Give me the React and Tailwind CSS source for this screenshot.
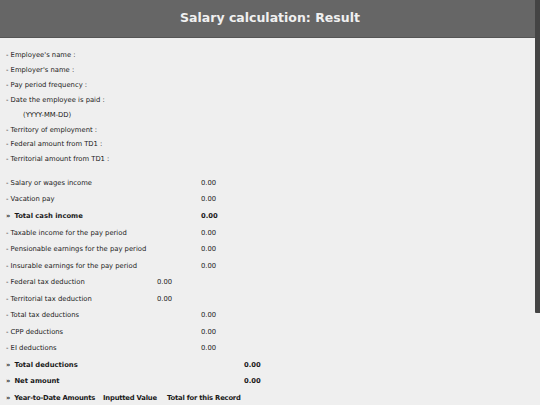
import React from "react";

const info = [
  "- Employee's name :",
  "- Employer's name :",
  "- Pay period frequency :",
  "- Date the employee is paid :",
  "(YYYY-MM-DD)",
  "- Territory of employment :",
  "- Federal amount from TD1 :",
  "- Territorial amount from TD1 :",
];

// col: 1 = narrow (157), 2 = middle (201), 3 = wide (244)
const amounts = [
  { label: "- Salary or wages income", col: 2 },
  { label: "- Vacation pay", col: 2 },
  { label: "Total cash income", col: 2, bold: true },
  { label: "- Taxable income for the pay period", col: 2 },
  { label: "- Pensionable earnings for the pay period", col: 2 },
  { label: "- Insurable earnings for the pay period", col: 2 },
  { label: "- Federal tax deduction", col: 1 },
  { label: "- Territorial tax deduction", col: 1 },
  { label: "- Total tax deductions", col: 2 },
  { label: "- CPP deductions", col: 2 },
  { label: "- EI deductions", col: 2 },
  { label: "Total deductions", col: 3, bold: true },
  { label: "Net amount", col: 3, bold: true },
];

const labelWidth = { 1: "w-[151px]", 2: "w-[195px]", 3: "w-[238px]" };

const Chevron = () => <span className="mr-[4px] font-bold">»</span>;

const App = () => {
  return (
    <div
      className="relative h-[405px] w-[540px] overflow-hidden bg-[#efefef] text-[#1a1a1a]"
      style={{ fontFamily: '"DejaVu Sans", sans-serif' }}
    >
      {/* Header */}
      <div className="flex h-[38px] items-center justify-center border-b border-[#555] bg-[#666]">
        <h1 className="text-[12.5px] font-bold text-[#f0f0f0]">Salary calculation: Result</h1>
      </div>

      {/* Employee info */}
      <div className="pl-[6px] pt-[10px] text-[6.8px]">
        {info.map((text) => (
          <div
            key={text}
            className={`flex h-[14.85px] items-center ${text.startsWith("(") ? "pl-[17px]" : ""}`}
          >
            {text}
          </div>
        ))}
      </div>

      {/* Amounts */}
      <div className="pl-[6px] pt-[8px] text-[6.8px]">
        {amounts.map((row) => (
          <div key={row.label} className={`flex h-[16.55px] items-center ${row.bold ? "font-bold" : ""}`}>
            <div className={`${labelWidth[row.col]} flex items-center`}>
              {row.bold && <Chevron />}
              {row.label}
            </div>
            <div>0.00</div>
          </div>
        ))}
        <div className="flex h-[16.55px] items-center font-bold tracking-[-0.2px]">
          <div className="flex w-[97px] items-center whitespace-nowrap">
            <Chevron />
            Year-to-Date Amounts
          </div>
          <div className="w-[64px] whitespace-nowrap">Inputted Value</div>
          <div className="whitespace-nowrap">Total for this Record</div>
        </div>
      </div>

      {/* Scrollbar */}
      <div className="absolute right-0 top-0 h-[313px] w-[5px] rounded-bl-[1px] bg-[#444]" />
    </div>
  );
};

export default App;
